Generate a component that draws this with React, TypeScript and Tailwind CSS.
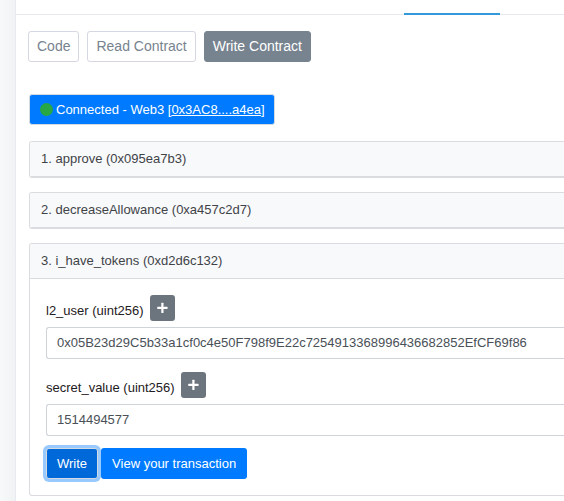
import { useState, type ReactNode } from "react";

const views = ["Code", "Read Contract", "Write Contract"];

function PlusIcon() {
  return (
    <svg viewBox="0 0 12 12" className="size-3" fill="currentColor" aria-hidden="true">
      <rect x="5.3" y="0.8" width="2.2" height="10.2" rx="0.5" />
      <rect x="1.3" y="4.8" width="10.2" height="2.2" rx="0.5" />
    </svg>
  );
}

function FunctionCard({ title, children }: { title: string; children?: ReactNode }) {
  return (
    <section className="overflow-hidden rounded-l-[3px] border border-r-0 border-[#dbdcdf] bg-white">
      <h2 className="border-b border-[#dbdcdf] bg-[#f8f9fa] px-[11px] text-[13px] leading-[34px] text-[#3f4348]">
        {title}
      </h2>
      {children}
    </section>
  );
}

function Field({ id, label, initial }: { id: string; label: string; initial: string }) {
  const [value, setValue] = useState(initial);
  return (
    <div>
      <div className="mb-1.5 flex h-[26px] items-end gap-1.5">
        <label htmlFor={id} className="text-[13px] leading-5 text-[#1e2022]">
          {label}
        </label>
        <button
          type="button"
          aria-label={"Add zeros to " + label}
          className="flex h-[26px] w-[25px] items-center justify-center rounded-[3px] bg-[#6c757d] text-white"
        >
          <PlusIcon />
        </button>
      </div>
      <input
        id={id}
        value={value}
        onChange={(e) => setValue(e.target.value)}
        className="block h-8 w-full rounded-l-[3px] border border-r-0 border-[#ced4da] bg-white px-2.5 pb-0.5 text-[13px] text-[#495057] outline-none"
      />
    </div>
  );
}

export default function App() {
  return (
    <div className="flex min-h-screen bg-white font-['Liberation_Sans',Arial,sans-serif]">
      <div className="w-[15px] shrink-0 bg-linear-to-r from-[#f8f9fb] to-[#f1f2f4]" />
      <main className="min-w-0 flex-1 border-l border-[#e7eaf3]">
        <div className="flex h-[15px] items-end justify-end border-b border-[#e7e8f0] pr-16">
          <div className="-mb-px h-0.5 w-24 bg-[#3498db]" />
        </div>

        <div className="flex gap-2 pt-4 pl-3">
          {views.map((view) => (
            <button
              key={view}
              type="button"
              className={
                "h-[31px] rounded-[3px] border px-2 pb-0.5 text-sm leading-5 whitespace-nowrap " +
                (view === "Write Contract"
                  ? "border-[#77838f] bg-[#77838f] text-white"
                  : "border-[#d5d7e3] bg-white text-[#77838f]")
              }
            >
              {view}
            </button>
          ))}
        </div>

        <div className="pt-8 pb-[5px] pl-[13px]">
          <div className="flex h-[31px] w-fit items-center rounded-[3px] border border-[#d5dae2] bg-[#007bff] pr-[9px] pl-2.5 text-[13px] leading-5 whitespace-nowrap text-white">
            <span className="mr-[3px] size-[13px] rounded-full bg-[#28a745]" />
            <span>
              Connected - Web3 [
              <a href="#address" className="underline">
                0x3AC8....a4ea
              </a>
              ]
            </span>
          </div>

          <div className="mt-4 flex flex-col gap-3.5">
            <FunctionCard title="1. approve (0x095ea7b3)" />
            <FunctionCard title="2. decreaseAllowance (0xa457c2d7)" />
            <FunctionCard title="3. i_have_tokens (0xd2d6c132)">
              <form className="py-4 pl-4" onSubmit={(e) => e.preventDefault()}>
                <div className="flex flex-col gap-[13px]">
                  <Field
                    id="l2_user"
                    label="l2_user (uint256)"
                    initial="0x05B23d29C5b33a1cf0c4e50F798f9E22c7254913368996436682852EfCF69f86"
                  />
                  <Field id="secret_value" label="secret_value (uint256)" initial="1514494577" />
                </div>
                <div className="mt-3 flex gap-[3px]">
                  <button
                    type="submit"
                    className="h-[31px] rounded-[3px] border border-[#d5dae2] bg-[#0069d9] px-2.5 text-[13px] text-white ring-[3px] ring-[#99caff] outline-none"
                  >
                    Write
                  </button>
                  <button
                    type="button"
                    className="h-[31px] rounded-[3px] bg-[#007bff] px-[11px] text-[13px] text-white"
                  >
                    View your transaction
                  </button>
                </div>
              </form>
            </FunctionCard>
          </div>
        </div>
      </main>
    </div>
  );
}
